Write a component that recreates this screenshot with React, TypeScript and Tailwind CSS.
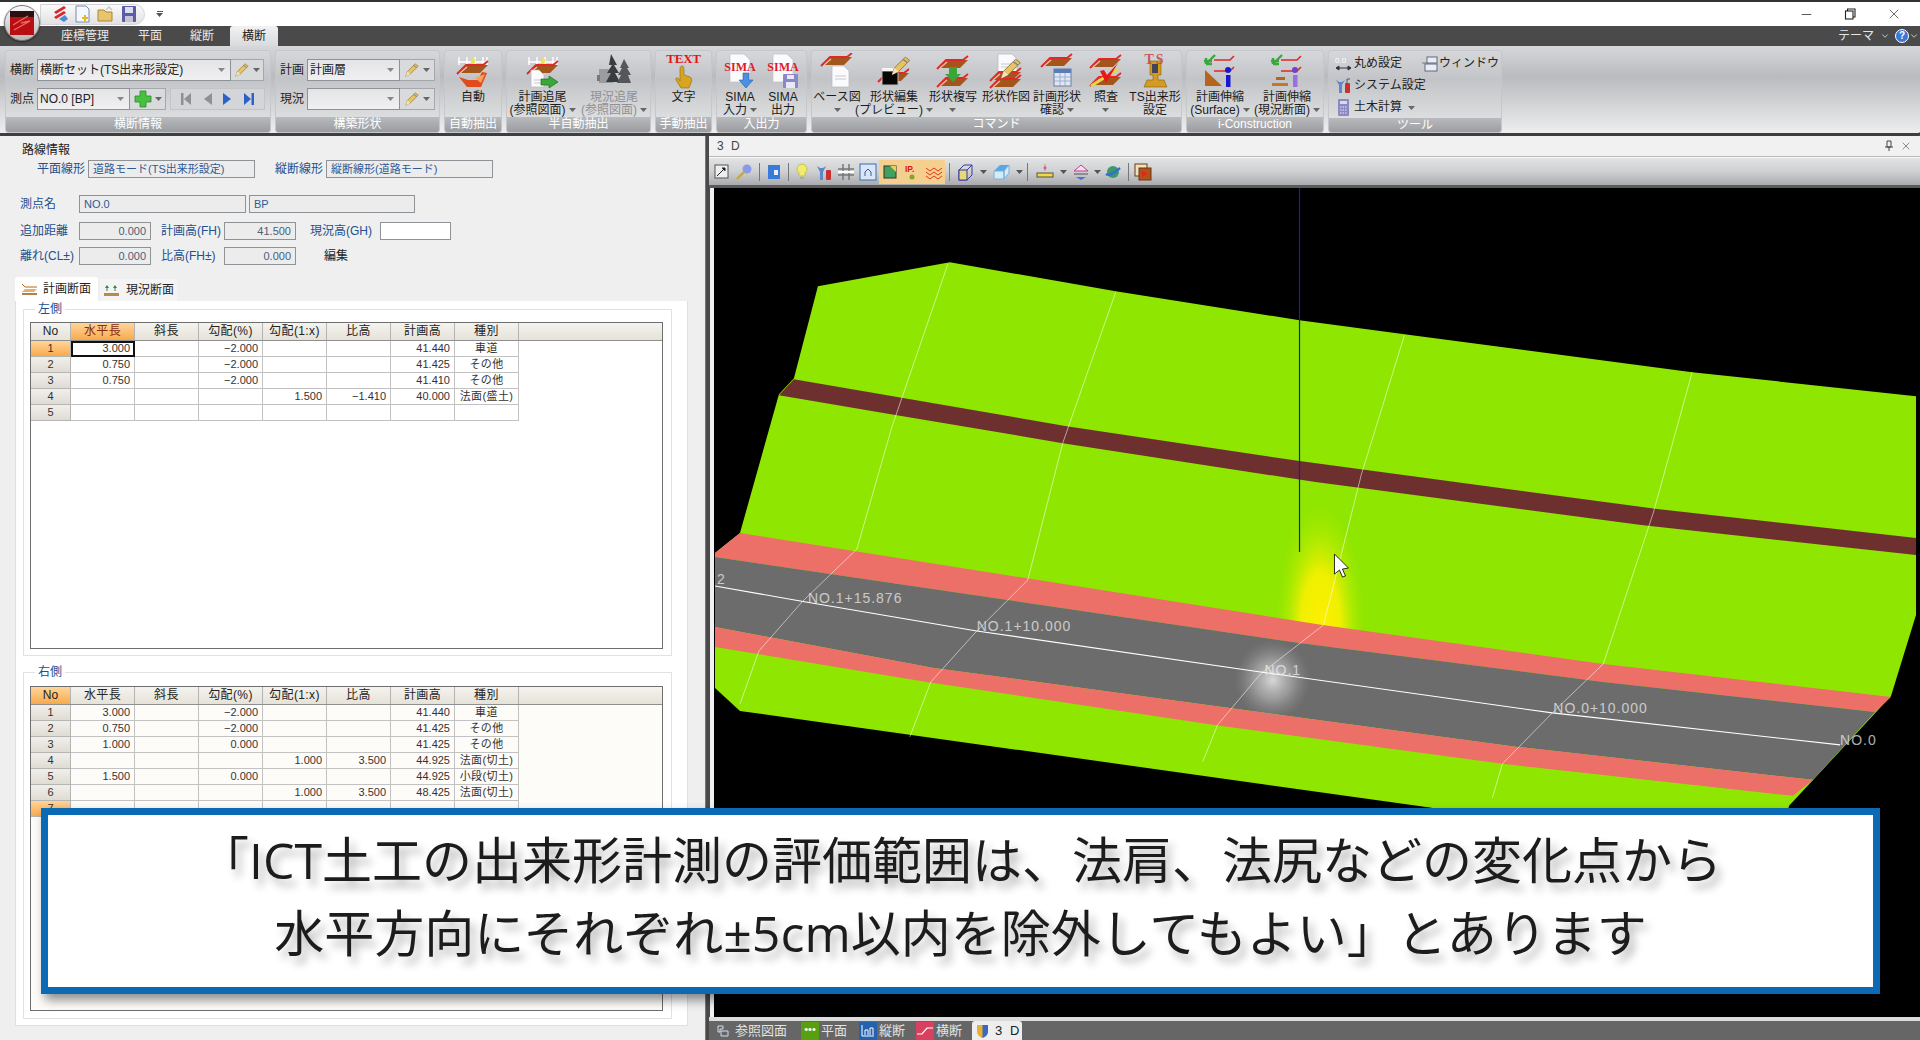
import React from "react";
import { Minus, X, ChevronDown } from "lucide-react";

const Arrow = ({ c = "#666" }: { c?: string }) => (
  <svg width="7" height="4" viewBox="0 0 7 4" className="inline-block shrink-0 align-middle"><path d="M0 0h7L3.5 4z" fill={c} /></svg>
);

const Slab = ({ y = 0, c = "#a4551c" }: { y?: number; c?: string }) => (
  <g transform={`translate(0 ${y})`}>
    <polygon points="3,12 11,4 33,4 25,12" fill={c} />
    <path d="M2 13 L11 4 H28 L33 0" fill="none" stroke="#e02828" strokeWidth="1.8" />
    <path d="M5 12 L12 6" stroke="#f3c4a4" strokeWidth="1.2" />
  </g>
);
const Doc = ({ x = 12, y = 16, w = 15, h = 18 }: { x?: number; y?: number; w?: number; h?: number }) => (
  <g>
    <path d={`M${x} ${y}h${w - 5}l5 5v${h - 5}H${x}z`} fill="#fbfbfd" stroke="#b5b8c0" strokeWidth=".7" />
    <path d={`M${x + 3} ${y + 10}h${w - 6}M${x + 3} ${y + 13}h${w - 6}`} stroke="#c9c9c9" />
  </g>
);
const Pen = ({ x = 0, y = 0, s = 1 }: { x?: number; y?: number; s?: number }) => (
  <g transform={`translate(${x} ${y}) scale(${s})`}>
    <path d="M1 17 L3 11 L13 1 L17 4 L7 14z" fill="#e8c35e" stroke="#7a6a3a" strokeWidth=".7" />
    <path d="M1 17 L3 11 L7 14z" fill="#f3e3c0" />
    <path d="M11 3 L15 6" stroke="#888" strokeWidth="1.4" />
  </g>
);
const Ruler = () => (
  <g>
    <path d="M3 9H33M4 4v8M12 4v8M20 4v8M28 4v8M32 4v8" stroke="#fff" strokeWidth="1.4" fill="none" />
    <circle cx="18" cy="8" r="2.4" fill="#e8e84a" />
  </g>
);
const Ic = ({ children, w = 36, h = 36 }: { children: React.ReactNode; w?: number; h?: number }) => (
  <svg width={w} height={h} viewBox={`0 0 ${w} ${h}`} className="block">{children}</svg>
);

const AutoIcon = () => (
  <Ic>
    <Ruler />
    <Slab y={8} />
    <path d="M4 24 L12 34 H26 L32 20 L27 19 L23 27 H13 Z" fill="#e04a1c" />
    <path d="M20 25 L30 21 L26 30z" fill="#f7a15c" />
  </Ic>
);
const TrackIcon = () => (
  <Ic>
    <Ruler />
    <Slab y={8} />
    <Doc x={6} y={17} w={13} h={17} />
    <path d="M16 26 h8 v-3 l9 6 -9 6 v-3 h-8z" fill="#38a83a" stroke="#1e6e20" strokeWidth=".7" />
  </Ic>
);
const TreesIcon = () => (
  <Ic>
    <rect x="3" y="16" width="14" height="14" fill="#9a9ca0" />
    <path d="M22 1 l6 11h-3l5 8h-4l5 9H17l5-9h-4l5-8h-3z" fill="#3a3c3e" transform="translate(-7 0)" />
    <path d="M28 6 l5 9h-2l4 7h-3l3 8H21l4-8h-3l4-7h-2z" fill="#54565a" />
    <rect x="1" y="22" width="3" height="6" fill="#777" />
  </Ic>
);
const TextIcon = () => (
  <div className="flex flex-col items-center w-[36px]">
    <span className="font-['Liberation_Serif',serif] font-bold text-[13px] leading-[12px] text-[#e01818] tracking-[-0.2px]">TEXT</span>
    <svg width="20" height="24" viewBox="0 0 20 24"><path d="M8 1c2 0 2 2 2 9l6 2c2 1 2 3 1 6l-2 5H7L2 15c-1-2 1-3 3-1l1 2V3c0-1 1-2 2-2z" fill="#d9a520" stroke="#8a6a10" strokeWidth=".6" /></svg>
  </div>
);
const SimaIcon = ({ save }: { save?: boolean }) => (
  <div className="relative w-[38px] h-[36px]">
    <svg width="38" height="36" viewBox="0 0 38 36" className="absolute inset-0">
      <path d="M9 1h14l6 6v22H9z" fill="#fbfbfd" stroke="#c0c3ca" strokeWidth=".7" />
      {save ? <g><rect x="19" y="21" width="15" height="14" rx="1" fill="#8b87c8" /><rect x="23" y="22" width="7" height="4" fill="#e8e8f8" /><rect x="22" y="29" width="9" height="6" fill="#e8e8f8" /></g> : <path d="M22 20h6v7h4l-7 8-7-8h4z" fill="#4c8ee0" stroke="#2a5ea8" strokeWidth=".6" />}
    </svg>
    <span className="absolute left-0 right-0 top-[8px] text-center font-['Liberation_Serif',serif] font-bold text-[12px] leading-[13px] text-[#e01828]">SIMA</span>
  </div>
);
const BaseIcon = () => (<Ic><Slab y={0} /><Doc x={13} y={13} w={17} h={21} /></Ic>);
const EditPrevIcon = () => (
  <Ic>
    <Slab y={16} />
    <rect x="6" y="18" width="16" height="14" fill="#070707" stroke="#bbb" />
    <rect x="6" y="15" width="16" height="3" fill="#f4f4f4" />
    <Pen x={15} y={3} s={1.1} />
  </Ic>
);
const CopyIcon = () => (
  <Ic>
    <Slab y={3} /><Slab y={21} />
    <path d="M14 14h8v7h4l-8 8-8-8h4z" fill="#3aa63a" />
  </Ic>
);
const DrawIcon = () => (
  <Ic><Doc x={10} y={1} w={19} h={24} /><Slab y={15} /><Slab y={22} c="#a4551c" /><Pen x={12} y={5} s={1.2} /></Ic>
);
const CheckShapeIcon = () => (
  <Ic>
    <Slab y={1} />
    <rect x="15" y="16" width="17" height="17" fill="#dfe7f4" stroke="#6f7fa0" />
    <rect x="15" y="16" width="17" height="4" fill="#5b7bb8" />
    <path d="M15 24h17M15 28h17M21 20v13M26 20v13" stroke="#8fa2c4" strokeWidth=".8" />
  </Ic>
);
const VerifyIcon = () => (
  <Ic>
    <Slab y={2} /><Slab y={20} />
    <path d="M3 33 L30 16" stroke="#e4d44e" strokeWidth="3" />
    <path d="M12 18l6 12L30 10l-11 12-3-5z" fill="#e81818" />
  </Ic>
);
const TsIcon = () => (
  <div className="relative w-[36px] h-[36px]">
    <svg width="36" height="36" viewBox="0 0 36 36" className="absolute inset-0">
      <path d="M13 8h11v14h-3v5h6l3 7H7l3-7h6v-5h-3z" fill="#d59a20" stroke="#8a6210" strokeWidth=".6" />
      <rect x="15" y="11" width="6" height="9" fill="#445" />
    </svg>
    <span className="absolute left-0 right-0 top-[0px] text-center font-['Liberation_Serif',serif] font-bold text-[14px] leading-[14px] tracking-[2px] text-[#c83a40] opacity-80">TS</span>
  </div>
);
const IConIcon = ({ v }: { v: 0 | 1 }) => (
  <Ic>
    <path d="M2 8h8M13 2 4 11M4 11V5M4 11h6" stroke="#3aa83a" strokeWidth="2.4" fill="none" />
    <path d="M12 7H28L32 3" stroke="#e02828" strokeWidth="1.6" fill="none" />
    <path d="M12 18H28L32 14" stroke="#e02828" strokeWidth="1.6" fill="none" />
    {v === 0 ? <polygon points="3,33 3,17 20,33" fill="#b5651d" /> : <g><rect x="7" y="24" width="9" height="3" fill="#b5651d" /><rect x="3" y="30" width="16" height="3" fill="#c4762a" /></g>}
    <circle cx="26" cy="17" r="3" fill={v === 0 ? "#1818d0" : "#7040c8"} />
    <rect x="24" y="22" width="4.5" height="12" fill={v === 0 ? "#1818d0" : "#9a70e0"} />
  </Ic>
);

const Big = ({ w, icon, lines, arrow, disabled }: { w: string; icon: React.ReactNode; lines: string[]; arrow?: boolean; disabled?: boolean }) => (
  <div className={`${w} flex flex-col items-center pt-[2px] shrink-0`}>
    <div className="h-[36px] flex items-start justify-center">{icon}</div>
    <div className={`mt-[2px] text-[12px] leading-[12.5px] text-center whitespace-nowrap ${disabled ? "text-[#8f9195]" : "text-[#1c1c1c]"}`}>
      {lines.map((l, i) => (
        <div key={i} className="flex items-center justify-center gap-[3px] h-[12.5px]">
          <span>{l}</span>
          {arrow && lines.length > 1 && i === lines.length - 1 && <Arrow />}
        </div>
      ))}
      {arrow && lines.length === 1 && <div className="flex justify-center h-[12.5px] items-center"><Arrow /></div>}
    </div>
  </div>
);

const Group = ({ w, label, children, body = "" }: { w: string; label: string; children: React.ReactNode; body?: string }) => (
  <div className={`${w} h-[83px] shrink-0 flex flex-col rounded-[3px] border border-[#c6c7ca] bg-linear-to-b from-[#d6d7da] via-[#c2c4c7] via-35% to-[#e6e7e8] overflow-hidden`}>
    <div className={`h-[67px] flex ${body}`}>{children}</div>
    <div className="h-[15px] leading-[15px] text-center text-[12px] text-white bg-linear-to-b from-[#b8babd] to-[#9a9c9f]">{label}</div>
  </div>
);

const PencilBox = ({ w }: { w: string }) => (
  <div className={`${w} h-[22px] flex items-center justify-center gap-[4px] border border-l-0 border-[#a4a7ab] bg-[#d9dadc] shrink-0`}>
    <svg width="14" height="16" viewBox="0 0 18 18"><Pen /></svg>
    <Arrow />
  </div>
);
const Combo = ({ w, text }: { w: string; text?: string }) => (
  <div className={`${w} h-[22px] flex items-center justify-between pl-[2px] pr-[5px] border border-[#8e9196] bg-linear-to-b from-[#e3e4e6] to-[#f0f0f1] text-[12px] text-[#222] whitespace-nowrap shrink-0`}>
    <span>{text}</span>
    <Arrow c="#888" />
  </div>
);

const Tab = ({ w, text, active, ml }: { w: string; text: string; active?: boolean; ml?: string }) => (
  <div className={`${w} ${ml ?? ""} h-[20px] text-center text-[12px] leading-[20px] ${active ? "bg-linear-to-b from-[#f2f2f3] to-[#d9dadc] text-[#222] rounded-t-[3px]" : "text-[#e9e9e9]"}`}>{text}</div>
);

const Field = ({ w, text, right, white }: { w: string; text?: string; right?: boolean; white?: boolean }) => (
  <div className={`${w} h-[18px] leading-[16px] border border-[#8f9297] px-[4px] text-[11px] whitespace-nowrap ${right ? "text-right text-[#4a5f7a]" : "text-[#2c5a96]"} ${white ? "bg-white" : "bg-[#ececec]"}`}>{text}</div>
);
const Lbl = ({ w, text, ml = "" }: { w: string; text: string; ml?: string }) => (
  <div className={`${w} ${ml} text-[12px] leading-[18px] text-[#20508f] whitespace-nowrap shrink-0`}>{text}</div>
);

const headers = ["水平長", "斜長", "勾配(%)", "勾配(1:x)", "比高", "計画高", "種別"];
type R = string[];
const leftRows: R[] = [
  ["3.000", "", "−2.000", "", "", "41.440", "車道"],
  ["0.750", "", "−2.000", "", "", "41.425", "その他"],
  ["0.750", "", "−2.000", "", "", "41.410", "その他"],
  ["", "", "", "1.500", "−1.410", "40.000", "法面(盛土)"],
  ["", "", "", "", "", "", ""],
];
const rightRows: R[] = [
  ["3.000", "", "−2.000", "", "", "41.440", "車道"],
  ["0.750", "", "−2.000", "", "", "41.425", "その他"],
  ["1.000", "", "0.000", "", "", "41.425", "その他"],
  ["", "", "", "1.000", "3.500", "44.925", "法面(切土)"],
  ["1.500", "", "0.000", "", "", "44.925", "小段(切土)"],
  ["", "", "", "1.000", "3.500", "48.425", "法面(切土)"],
  ["", "", "", "", "", "", ""],
];
const orange = "bg-linear-to-b from-[#ffd596] to-[#f8aa4c]";
const Grid = ({ rows, h, side }: { rows: R[]; h: string; side: "L" | "R" }) => (
  <div className={`${h} w-[633px] border border-[#6e6e6e] ${side === "L" ? "bg-white" : "bg-[#fdfcf9]"} overflow-hidden`}>
    <div className="flex h-[18px] bg-linear-to-b from-[#f5f3ee] to-[#e5e2d9] border-b border-[#8f8f8f] text-[12px] leading-[17px] text-center text-[#222]">
      <div className={`w-[40px] border-r border-[#b4b4b4] ${side === "R" ? orange : ""}`}>No</div>
      {headers.map((t, i) => (
        <div key={t} className={`w-[64px] border-r border-[#b4b4b4] whitespace-nowrap overflow-hidden tracking-[0.4px] ${side === "L" && i === 0 ? orange + " text-[#8a2c10]" : ""}`}>{t}</div>
      ))}
    </div>
    {rows.map((r, i) => {
      const lastActive = (side === "L" && i === 0) || (side === "R" && i === 6);
      return (
        <div key={i} className="flex h-[16px] text-[11px] leading-[15px] text-[#333]">
          <div className={`w-[40px] text-center border-r border-b border-[#b4b4b4] ${lastActive ? orange : "bg-linear-to-b from-[#f1efe9] to-[#dfdcd4]"}`}>{i + 1}</div>
          {r.map((c, j) => (
            <div key={j} className={`w-[64px] border-r border-b border-[#c2c2c2] whitespace-nowrap overflow-hidden ${j === 6 ? "text-center tracking-[0.4px]" : "text-right px-[4px]"} ${side === "L" && i === 0 && j === 0 ? "outline-2 -outline-offset-2 outline-[#111]" : ""}`}>{c}</div>
          ))}
        </div>
      );
    })}
  </div>
);

const Sep = ({ w }: { w: string }) => (
  <div className={`${w} h-[18px] flex justify-center shrink-0`}><div className="w-px h-full bg-[#777]" /></div>
);
const Tool = ({ children, hi, ml = "" }: { children: React.ReactNode; hi?: boolean; ml?: string }) => (
  <div className={`w-[22px] h-[24px] ${ml} flex items-center justify-center shrink-0 ${hi ? "bg-[#f4cf8e]" : ""}`}>
    <svg width="18" height="18" viewBox="0 0 18 18">{children}</svg>
  </div>
);
const TArrow = ({ w = "w-[14px]" }: { w?: string }) => (
  <div className={`${w} flex justify-center shrink-0`}><Arrow c="#555" /></div>
);

const View3D = () => (
  <svg viewBox="713 186 1207 829" className="block w-full h-full">
    <defs>
      <radialGradient id="yl" cx="50%" cy="100%" r="100%" gradientTransform="translate(0.5 1) scale(0.5 1) translate(-0.5 -1)">
        <stop offset="0" stopColor="#fff000" />
        <stop offset=".45" stopColor="#f4f000" stopOpacity=".95" />
        <stop offset=".75" stopColor="#c8ee00" stopOpacity=".45" />
        <stop offset="1" stopColor="#a8ea00" stopOpacity="0" />
      </radialGradient>
      <radialGradient id="wh">
        <stop offset="0" stopColor="#dedede" stopOpacity=".95" />
        <stop offset=".5" stopColor="#b8b8b8" stopOpacity=".6" />
        <stop offset="1" stopColor="#909090" stopOpacity="0" />
      </radialGradient>
    </defs>
    <polygon points="817,284 949,260 1115,289 1299,318 1404,332 1692,370 1916,394 1916,613 1891,694 1789,804 1786,815 1440,815 1431,806 739,709 714,686 714,551 739,531 778,392 793,376" fill="#8fe600" />
    <rect x="1275" y="500" width="90" height="128" fill="url(#yl)" />
    <polygon points="793,377 1066,424 1299,459 1657,507 1916,536 1916,553 1641,523 1315,480 1062,441 890,412 778,393" fill="#6e2f2f" />
    <polygon points="739,531 1322,623 1603,662 1891,695 1875,710 1603,680 1299,641 714,555 714,551" fill="#ec6f68" />
    <polygon points="714,555 1299,641 1603,680 1875,710 1813,778 1517,745 1229,706 933,666 714,625" fill="#6c6c6c" />
    <polygon points="714,625 933,666 1229,706 1517,745 1813,778 1793,794 1502,762 1214,723 926,680 714,645" fill="#ec6f68" />
    <ellipse cx="1272" cy="678" rx="38" ry="40" fill="url(#wh)" />
    <g fill="none" stroke="#fff" strokeWidth=".9" opacity=".6">
      <polyline points="947,262 891,425 856,547 801,600 758,649 739,702" />
      <polyline points="1115,290 1062,441 1027,578 976,629 930,680 909,735" />
      <polyline points="1404,333 1361,472 1323,623 1260,672 1217,723 1202,760" />
      <polyline points="1692,370 1653,511 1603,662 1552,711 1502,762 1492,796" />
    </g>
    <polyline points="714,584 805,600 976,629 1260,670 1552,711 1840,743" fill="none" stroke="#fff" strokeWidth="1.1" />
    <line x1="1299" y1="186" x2="1299" y2="550" stroke="#1818c8" strokeWidth="1.2" />
    <g fill="#eee" fontSize="14" letterSpacing="1" fontFamily="'Liberation Sans',sans-serif" opacity=".72">
      <text x="716" y="582">2</text>
      <text x="807" y="601">NO.1+15.876</text>
      <text x="976" y="629">NO.1+10.000</text>
      <text x="1264" y="673">NO.1</text>
      <text x="1553" y="711">NO.0+10.000</text>
      <text x="1840" y="743">NO.0</text>
    </g>
    <path d="M1334 552v20l5-4 3 7 3-1-3-7 6-1z" fill="#fff" stroke="#000" strokeWidth=".8" />
  </svg>
);

export default function App() {
  return (
    <div className="relative w-[1920px] h-[1040px] overflow-hidden flex flex-col bg-[#4a4a4a] font-['Liberation_Sans','Noto_Sans_CJK_JP',sans-serif]">
      {/* Title bar */}
      <div className="h-[26px] shrink-0 bg-white border-t-2 border-[#333] flex items-center">
        <div className="ml-[40px] w-[105px] h-[21px] rounded-r-full bg-linear-to-b from-[#fafafa] to-[#e2e2e4] border border-[#d4d4d6] flex items-center gap-[5px] pl-[10px] shrink-0">
          <svg width="18" height="18" viewBox="0 0 18 18"><path d="M3 7 L13 1 L15 3 L5 9z M3 12 L13 6 L15 8 L5 14z" fill="#d8282a" /><path d="M8 14l6-4 3 4-4 3z" fill="#4a8ad8" /></svg>
          <svg width="18" height="18" viewBox="0 0 18 18"><path d="M2 1h10l3 3v13H2z" fill="#f4f7fd" stroke="#7a8ab0" /><path d="M11 10v6M8 13h6" stroke="#e8b820" strokeWidth="2" /></svg>
          <svg width="18" height="18" viewBox="0 0 18 18"><path d="M1 5h6l2 2h6v9H1z" fill="#e8c46a" stroke="#a8863a" /><path d="M9 5l3-3 3 3" stroke="#c8c8c8" strokeWidth="1.5" fill="none" /></svg>
          <svg width="18" height="18" viewBox="0 0 18 18"><rect x="2" y="1" width="14" height="16" rx="1" fill="#5a5ca8" /><rect x="5" y="2" width="8" height="6" fill="#dde" /><rect x="5" y="11" width="8" height="6" fill="#c4c4d4" /></svg>
        </div>
        <div className="ml-[11px] flex flex-col items-center gap-[1px]"><div className="w-[6px] h-px bg-[#555]" /><Arrow c="#555" /></div>
        <div className="flex-1" />
        <div className="w-[44px] flex justify-center"><Minus size={15} strokeWidth={1.2} color="#222" /></div>
        <div className="w-[44px] flex justify-center">
          <svg width="12" height="12" viewBox="0 0 12 12" fill="none" stroke="#222" strokeWidth="1.1"><rect x="1.5" y="3" width="7.5" height="8" /><path d="M3.5 3V1H11v8H9" /></svg>
        </div>
        <div className="w-[44px] mr-[4px] flex justify-center"><X size={16} strokeWidth={1} color="#222" /></div>
      </div>

      {/* Ribbon tabs */}
      <div className="h-[20px] shrink-0 bg-[#4a4a4a] flex items-center">
        <Tab w="w-[72px]" ml="ml-[49px]" text="座標管理" />
        <Tab w="w-[48px]" ml="ml-[5px]" text="平面" />
        <Tab w="w-[48px]" ml="ml-[4px]" text="縦断" />
        <Tab w="w-[48px]" ml="ml-[4px]" text="横断" active />
        <div className="flex-1" />
        <div className="text-[12px] text-[#e6e6e6]">テーマ</div>
        <ChevronDown size={10} color="#ddd" className="ml-[6px]" />
        <div className="ml-[5px] w-[14px] h-[14px] rounded-full bg-[#3a78d8] border border-white text-white text-[10px] leading-[12px] text-center font-bold">?</div>
        <ChevronDown size={10} color="#ddd" className="mr-[1px]" />
      </div>

      {/* Ribbon */}
      <div className="h-[90px] shrink-0 pt-[4px] pl-[5px] flex gap-[4px] bg-linear-to-b from-[#d6d7da] via-[#b9bbbe] via-35% to-[#eeeeef] border-b-[3px] border-[#3e3e3e] rounded-br-[4px]">
        <Group w="w-[266px]" label="横断情報">
          <div className="pt-[8px] pl-[4px] flex flex-col gap-[7px]">
            <div className="flex items-center">
              <div className="w-[27px] text-[12px] text-[#222]">横断</div>
              <Combo w="w-[194px]" text="横断セット(TS出来形設定)" />
              <PencilBox w="w-[33px]" />
            </div>
            <div className="flex items-center">
              <div className="w-[27px] text-[12px] text-[#222]">測点</div>
              <Combo w="w-[93px]" text="NO.0 [BP]" />
              <div className="w-[36px] h-[22px] flex items-center justify-center gap-[3px] border border-l-0 border-[#a4a7ab] bg-[#d9dadc]">
                <svg width="18" height="18" viewBox="0 0 18 18"><path d="M6 1h6v5h5v6h-5v5H6v-5H1V6h5z" fill="#48c040" stroke="#2a8a28" strokeWidth=".8" /></svg>
                <Arrow />
              </div>
              <div className="ml-[4px] w-[95px] h-[22px] flex items-center justify-around px-[3px] border border-[#c2c4c7] bg-[#d4d5d8]">
                <svg width="12" height="14" viewBox="0 0 12 14"><rect x="1" y="1" width="2.5" height="12" fill="#8f9094" /><path d="M11 1v12L4 7z" fill="#8f9094" /></svg>
                <svg width="8" height="14" viewBox="0 0 8 14"><path d="M8 1v12L0 7z" fill="#8f9094" /></svg>
                <svg width="8" height="14" viewBox="0 0 8 14"><path d="M0 1v12l8-6z" fill="#2a62c8" /></svg>
                <svg width="12" height="14" viewBox="0 0 12 14"><path d="M1 1v12l7-6z" fill="#2a62c8" /><rect x="8.5" y="1" width="2.5" height="12" fill="#2a62c8" /></svg>
              </div>
            </div>
          </div>
        </Group>
        <Group w="w-[165px]" label="構築形状">
          <div className="pt-[8px] pl-[4px] flex flex-col gap-[7px]">
            <div className="flex items-center">
              <div className="w-[27px] text-[12px] text-[#222]">計画</div>
              <Combo w="w-[93px]" text="計画層" />
              <PencilBox w="w-[35px]" />
            </div>
            <div className="flex items-center">
              <div className="w-[27px] text-[12px] text-[#222]">現況</div>
              <Combo w="w-[93px]" />
              <PencilBox w="w-[35px]" />
            </div>
          </div>
        </Group>
        <Group w="w-[58px]" label="自動抽出" body="justify-center">
          <Big w="w-[56px]" icon={<AutoIcon />} lines={["自動"]} />
        </Group>
        <Group w="w-[145px]" label="半自動抽出">
          <Big w="w-[71px]" icon={<TrackIcon />} lines={["計画追尾", "(参照図面)"]} arrow />
          <Big w="w-[72px]" icon={<TreesIcon />} lines={["現況追尾", "(参照図面)"]} arrow disabled />
        </Group>
        <Group w="w-[57px]" label="手動抽出" body="justify-center">
          <Big w="w-[55px]" icon={<TextIcon />} lines={["文字"]} />
        </Group>
        <Group w="w-[91px]" label="入出力" body="justify-center">
          <Big w="w-[43px]" icon={<SimaIcon />} lines={["SIMA", "入力"]} arrow />
          <Big w="w-[43px]" icon={<SimaIcon save />} lines={["SIMA", "出力"]} />
        </Group>
        <Group w="w-[371px]" label="コマンド">
          <Big w="w-[50px]" icon={<BaseIcon />} lines={["ベース図"]} arrow />
          <Big w="w-[64px]" icon={<EditPrevIcon />} lines={["形状編集", "(プレビュー)"]} arrow />
          <Big w="w-[54px]" icon={<CopyIcon />} lines={["形状複写"]} arrow />
          <Big w="w-[52px]" icon={<DrawIcon />} lines={["形状作図"]} />
          <Big w="w-[50px]" icon={<CheckShapeIcon />} lines={["計画形状", "確認"]} arrow />
          <Big w="w-[48px]" icon={<VerifyIcon />} lines={["照査"]} arrow />
          <Big w="w-[50px]" icon={<TsIcon />} lines={["TS出来形", "設定"]} />
        </Group>
        <Group w="w-[138px]" label="i-Construction">
          <Big w="w-[66px]" icon={<IConIcon v={0} />} lines={["計画伸縮", "(Surface)"]} arrow />
          <Big w="w-[68px]" icon={<IConIcon v={1} />} lines={["計画伸縮", "(現況断面)"]} arrow />
        </Group>
        <Group w="w-[174px]" label="ツール">
          <div className="pl-[6px] pt-[1px] flex flex-col text-[12px] text-[#222] leading-[22px] whitespace-nowrap">
            <div className="flex items-center h-[22px]">
              <svg width="17" height="17" viewBox="0 0 17 17" className="shrink-0"><text x="0" y="8" fontSize="8" fill="#fff" fontFamily="'Liberation Sans',sans-serif">0.0</text><path d="M1 13h15M1 13l3-2v4zM16 13l-3-2v4z" stroke="#334" fill="#334" /></svg>
              <span className="ml-[2px] w-[67px] shrink-0">丸め設定</span>
              <svg width="17" height="17" viewBox="0 0 17 17" className="shrink-0"><path d="M1 8h6" stroke="#777" /><rect x="6" y="2" width="10" height="6" fill="#e8eef8" stroke="#667" /><rect x="4" y="9" width="12" height="7" fill="#e8eef8" stroke="#667" /></svg>
              <span className="ml-[1px]">ウィンドウ</span>
              <span className="ml-[4px]"><Arrow /></span>
            </div>
            <div className="flex items-center h-[22px]">
              <svg width="17" height="17" viewBox="0 0 17 17"><path d="M1 3l3 5v8h3V8l3-5-3 2H4z" fill="#5a88c8" /><rect x="10" y="6" width="5" height="10" rx="1" fill="#c83030" /><path d="M12 6V2h3" stroke="#555" fill="none" /></svg>
              <span className="ml-[2px]">システム設定</span>
            </div>
            <div className="flex items-center h-[22px]">
              <svg width="17" height="17" viewBox="0 0 17 17"><rect x="3" y="0" width="11" height="17" rx="1" fill="#8a8ac0" /><rect x="5" y="2" width="7" height="3" fill="#d8d8f0" /><path d="M5 8h7M5 11h7M5 14h7" stroke="#e8e8f8" strokeDasharray="1.5 1" /></svg>
              <span className="ml-[2px]">土木計算</span>
              <span className="ml-[6px]"><Arrow /></span>
            </div>
          </div>
        </Group>
      </div>

      {/* Body */}
      <div className="flex-1 min-h-0 flex">
        {/* Left panel */}
        <div className="w-[706px] shrink-0 h-full bg-[#efefef] border-r border-[#777] text-[12px] flex flex-col">
          <div className="ml-[22px] mt-[7px] h-[14px] leading-[14px] text-[#222]">路線情報</div>
          <div className="mt-[3px] ml-[37px] flex">
            <Lbl w="w-[51px]" text="平面線形" />
            <Field w="w-[167px]" text="道路モード(TS出来形設定)" />
            <Lbl w="w-[51px]" ml="ml-[20px]" text="縦断線形" />
            <Field w="w-[167px]" text="縦断線形(道路モード)" />
          </div>
          <div className="mt-[17px] ml-[20px] flex">
            <Lbl w="w-[59px]" text="測点名" />
            <Field w="w-[167px]" text="NO.0" />
            <Field w="w-[166px] ml-[3px]" text="BP" />
          </div>
          <div className="mt-[9px] ml-[20px] flex">
            <Lbl w="w-[59px]" text="追加距離" />
            <Field w="w-[72px]" text="0.000" right />
            <Lbl w="w-[63px]" ml="ml-[10px]" text="計画高(FH)" />
            <Field w="w-[72px]" text="41.500" right />
            <Lbl w="w-[70px]" ml="ml-[14px]" text="現況高(GH)" />
            <Field w="w-[71px]" white />
          </div>
          <div className="mt-[7px] ml-[20px] flex">
            <Lbl w="w-[59px]" text="離れ(CL±)" />
            <Field w="w-[72px]" text="0.000" right />
            <Lbl w="w-[63px]" ml="ml-[10px]" text="比高(FH±)" />
            <Field w="w-[72px]" text="0.000" right />
            <div className="ml-[28px] leading-[18px] text-[#222]">編集</div>
          </div>
          <div className="mt-[12px] ml-[15px] flex items-end h-[24px]">
            <div className="w-[83px] h-[24px] bg-white flex items-center gap-[5px] pl-[6px] rounded-t-[2px]">
              <svg width="17" height="13" viewBox="0 0 17 13"><path d="M1 1l3 3h12" stroke="#b5651d" fill="none" /><path d="M1 9l3-3h12l-3 3z" fill="#e8b060" /><path d="M1 11h15" stroke="#8a4a10" strokeWidth="1.4" /></svg>
              <span className="text-[#222]">計画断面</span>
            </div>
            <div className="ml-[2px] w-[77px] h-[22px] bg-[#f4f4f4] flex items-center gap-[6px] pl-[3px]">
              <svg width="17" height="13" viewBox="0 0 17 13"><path d="M4 1l2 3H2zM12 1l2 3h-4z" fill="#2a8a38" /><path d="M4 4v3M12 4v3" stroke="#2a8a38" /><path d="M1 9h15v3H1z" fill="#b98a4a" /></svg>
              <span className="text-[#222]">現況断面</span>
            </div>
          </div>
          <div className="mx-[15px] w-[673px] h-[725px] bg-white pt-[8px] pl-[7px] pr-[15px] flex flex-col gap-[16px] border border-t-0 border-[#e0e0e0]">
            <div className="relative h-[347px] border border-[#e2e2e2] pt-[12px] pl-[6px]">
              <span className="absolute left-[11px] -top-[9px] px-[3px] bg-white text-[#20508f] leading-[16px]">左側</span>
              <Grid rows={leftRows} h="h-[327px]" side="L" />
            </div>
            <div className="relative h-[347px] border border-[#e2e2e2] pt-[13px] pl-[6px]">
              <span className="absolute left-[11px] -top-[9px] px-[3px] bg-white text-[#20508f] leading-[16px]">右側</span>
              <Grid rows={rightRows} h="h-[325px]" side="R" />
            </div>
          </div>
        </div>

        {/* Right panel */}
        <div className="flex-1 min-w-0 h-full pl-[3px] bg-[#4a4a4a] flex flex-col">
          <div className="h-[21px] shrink-0 bg-[#f1f1f1] border-b border-[#b9b9b9] flex items-center justify-between px-[8px] text-[12px] text-[#444]">
            <span className="tracking-[2px]">3 D</span>
            <div className="flex items-center gap-[6px]">
              <svg width="10" height="12" viewBox="0 0 10 12" fill="none" stroke="#444"><path d="M3 1h4v6H3zM1 7h8M5 7v4" /></svg>
              <X size={12} strokeWidth={1.2} color="#444" />
            </div>
          </div>
          <div className="h-[28px] shrink-0 pl-[2px] flex items-center bg-linear-to-b from-[#e2e3e4] via-[#cfd0d2] to-[#a9abae] border-t border-[#f8f8f8]">
            <Tool><rect x="2" y="2" width="13" height="13" fill="#eee" stroke="#555" /><path d="M4 13l8-8M9 5h3v3" stroke="#222" /></Tool>
            <Tool><circle cx="12" cy="6" r="4.5" fill="#8a9ae8" /><path d="M9 9l-7 7" stroke="#c8a83a" strokeWidth="2.4" /></Tool>
            <Sep w="w-[8px]" />
            <Tool><rect x="3" y="2" width="12" height="14" fill="#3a7ad8" /><rect x="9" y="7" width="4" height="5" fill="#e8f0ff" /></Tool>
            <Sep w="w-[6px]" />
            <Tool><path d="M9 1a5 5 0 0 1 3 9v3H6v-3a5 5 0 0 1 3-9z" fill="#f0ec70" stroke="#c8c050" /><path d="M7 15h4" stroke="#999" /></Tool>
            <Tool><path d="M2 3l3 6v8h3V9l3-6-3 2H5z" fill="#5a88c8" /><rect x="11" y="7" width="5" height="10" rx="1" fill="#c83030" /></Tool>
            <Tool><path d="M1 6h16M1 12h16M6 1v16M12 1v16" stroke="#777" strokeWidth="1.5" /><path d="M1 9h16" stroke="#fff" strokeWidth="2" /></Tool>
            <Tool><rect x="1" y="1" width="16" height="16" fill="#d8e6f8" stroke="#3a6ab0" /><path d="M6 13V9l3-3 3 3v4" stroke="#3a5a98" fill="none" /></Tool>
            <Tool hi><rect x="3" y="3" width="12" height="12" fill="#40a060" stroke="#333" /><path d="M9 3h6v6" fill="#e8d060" /></Tool>
            <Tool hi><text x="2" y="9" fontSize="8.5" fontWeight="700" fill="#e01818" fontFamily="'Liberation Sans',sans-serif">IP.</text><circle cx="9" cy="14" r="2.5" fill="#88a030" /></Tool>
            <Tool hi><path d="M1 5l4 3 4-3 4 3 4-3M1 9l4 3 4-3 4 3 4-3M1 13l4 3 4-3 4 3 4-3" stroke="#e03818" fill="none" /></Tool>
            <Sep w="w-[8px]" />
            <Tool ml="ml-px"><path d="M3 7l5-5h8v10l-5 5H3z" fill="none" stroke="#3a3a98" /><rect x="3" y="7" width="8" height="10" fill="#e8d878" stroke="#3a3a98" /><path d="M11 7l5-5" stroke="#3a3a98" /></Tool>
            <TArrow />
            <Tool><path d="M2 8l6-6h9l-5 6z" fill="#58a8e8" /><path d="M2 8h10v8H2zM12 8l5-6v8l-5 6z" fill="#d4ecf8" stroke="#78b0d8" /></Tool>
            <TArrow />
            <Sep w="w-[2px]" />
            <Tool ml="ml-[6px]"><circle cx="9" cy="5" r="1.4" fill="#e03030" /><path d="M9 1v7" stroke="#c8a" /><rect x="1" y="10" width="16" height="4" fill="#f0d840" stroke="#554" /></Tool>
            <TArrow />
            <Tool><path d="M9 2l7 6H2z" fill="#f0e0f0" stroke="#c83a90" /><path d="M2 11h14" stroke="#555" /><path d="M9 17l-5-3h10z" fill="#3a7ad8" /></Tool>
            <TArrow w="w-[10px]" />
            <Tool><circle cx="9" cy="9" r="6" fill="#3a9a6a" /><path d="M2 11c4 3 10-3 14-6" stroke="#3a6ad8" strokeWidth="2.4" fill="none" /></Tool>
            <Sep w="w-[8px]" />
            <Tool><rect x="1" y="1" width="12" height="12" fill="#f0e0c0" stroke="#6a3a10" /><rect x="5" y="5" width="12" height="12" fill="#b5501c" stroke="#6a3a10" /><path d="M8 8l5 3-5 3z" fill="#e82020" /></Tool>
          </div>
          <div className="h-[3px] shrink-0 bg-[#5a5a5a]" />
          <div className="h-[829px] shrink-0 ml-[1px] bg-black border-l-[4px] border-[#f1f1f1] w-[1210px]">
            <View3D />
          </div>
          <div className="h-[4px] shrink-0 bg-[#dcdcdc]" />
          <div className="flex-1 min-h-0 bg-[#666] flex items-center text-[13px] text-[#e2e2e2] pl-[5px] whitespace-nowrap">
            <svg width="14" height="14" viewBox="0 0 14 14" className="ml-[2px]" fill="none" stroke="#cde"><path d="M2 2h5v3H4v3H2zM5 7h7v5H5z" /></svg>
            <span className="ml-[5px]">参照図面</span>
            <div className="ml-[14px] w-[18px] h-[18px] bg-[#58a010] text-white text-[11px] leading-[14px] text-center">•••</div>
            <span className="ml-[2px]">平面</span>
            <div className="ml-[12px] w-[18px] h-[18px] bg-[#2462b0] flex items-end justify-center pb-[3px]"><svg width="14" height="12" viewBox="0 0 14 12" fill="none" stroke="#fff"><path d="M1 0v11h12M4 10V5h3v5M9 10V3h3v7" /></svg></div>
            <span className="ml-[2px]">縦断</span>
            <div className="ml-[11px] w-[18px] h-[18px] bg-[#d84060] flex items-center justify-center"><svg width="16" height="12" viewBox="0 0 16 12" fill="none" stroke="#fff" strokeWidth="1.2"><path d="M0 9h5l5-6h6" /></svg></div>
            <span className="ml-[2px]">横断</span>
            <div className="ml-[10px] w-[50px] h-[20px] rounded-t-[3px] bg-[#eeeeee] text-[#222] flex items-center gap-[6px] pl-[4px]">
              <svg width="13" height="16" viewBox="0 0 13 16"><path d="M1 2h11v6c0 4-3 6-5.5 7C4 14 1 12 1 8z" fill="#e8b030" /><path d="M6.5 2H12v6c0 4-3 6-5.5 7z" fill="#3a68c0" /></svg>
              <span className="tracking-[2px]">3 D</span>
            </div>
          </div>
        </div>
      </div>

      {/* App button */}
      <div className="absolute left-[4px] top-[5px] w-[36px] h-[36px] rounded-full bg-linear-to-b from-[#fafafa] to-[#b8b8b8] border border-[#777] flex items-center justify-center shadow-[0_1px_2px_rgba(0,0,0,.5)]">
        <svg width="24" height="24" viewBox="0 0 24 24"><rect width="24" height="24" fill="#b80f12" /><rect width="24" height="6" fill="#2a1010" /><path d="M3 14 L18 5M4 19 L20 10M11 12l9-2" stroke="#f06a60" strokeWidth="1.3" fill="none" /></svg>
      </div>

      {/* Caption overlay */}
      <div className="absolute left-[41px] top-[808px] w-[1839px] h-[186px] bg-white border-[7px] border-[#0a6ab5] shadow-[4px_6px_10px_rgba(0,0,0,.45)] flex flex-col items-center justify-center pb-[8px] font-['Open_Sans','Noto_Sans_CJK_JP',sans-serif] font-normal text-[50px] leading-[73px] text-[#1c1c1c] [text-shadow:5px_7px_9px_rgba(0,0,0,.3)] whitespace-nowrap">
        <div>「ICT土工の出来形計測の評価範囲は、法肩、法尻などの変化点から</div>
        <div>水平方向にそれぞれ±5cm以内を除外してもよい」とあります</div>
      </div>
    </div>
  );
}
